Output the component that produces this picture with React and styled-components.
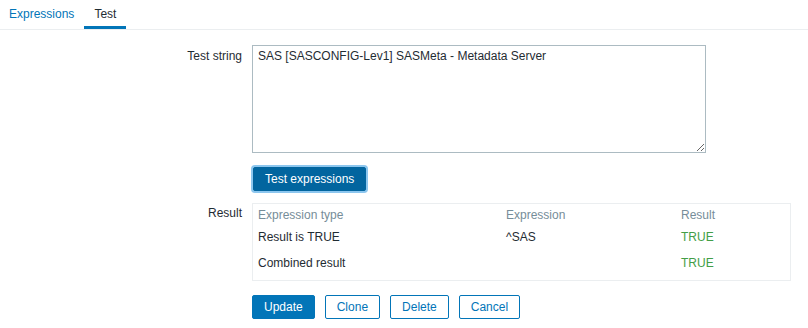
import React from "react";
import styled, { createGlobalStyle } from "styled-components";

const GlobalStyle = createGlobalStyle`
  body {
    margin: 0;
    background: #ffffff;
    font-family: "Liberation Sans", Arial, sans-serif;
    font-size: 12px;
    color: #1f2c33;
  }
`;

const TabBar = styled.div`
  display: flex;
  height: 29px;
  border-bottom: 1px solid #ebeef0;
  margin-left: -1px;
`;

const Tab = styled.div`
  padding: 2px 10px 0;
  line-height: 24px;
  height: 29px;
  box-sizing: border-box;
  color: ${(p) => (p.active ? "#1f2c33" : "#0275b8")};
  border-bottom: 3px solid ${(p) => (p.active ? "#0275b8" : "transparent")};
`;

const Form = styled.div`
  display: grid;
  grid-template-columns: 242px 1fr;
  column-gap: 10px;
  padding-top: 15px;
`;

const Label = styled.div`
  text-align: right;
  padding-top: ${(p) => p.top || 4}px;
  line-height: 14px;
`;

const Field = styled.div`
  margin-bottom: ${(p) => p.gap || 0}px;
`;

const TextArea = styled.textarea`
  display: block;
  width: 454px;
  height: 108px;
  box-sizing: border-box;
  border: 1px solid #acbbc2;
  padding: 3px 5px;
  font-family: "Liberation Sans", Arial, sans-serif;
  font-size: 12px;
  line-height: 14px;
  color: #1f2c33;
  outline: none;
`;

const Button = styled.button`
  height: 24px;
  box-sizing: border-box;
  padding: 0 11px;
  font-family: "Liberation Sans", Arial, sans-serif;
  font-size: 12px;
  line-height: 22px;
  border-radius: 2px;
  border: 1px solid #0275b8;
  background: ${(p) => (p.primary ? "#0275b8" : "#ffffff")};
  color: ${(p) => (p.primary ? "#ffffff" : "#0275b8")};
  cursor: pointer;
`;

const FocusButton = styled(Button)`
  background: #02659f;
  border-color: #02659f;
  margin-left: 1px;
  box-shadow: 0 0 0 2px #8cc6ee;
`;

const Table = styled.div`
  width: 537px;
  border: 1px solid #ebeef0;
  padding-bottom: 6px;
`;

const Row = styled.div`
  display: grid;
  grid-template-columns: 248px 175px 1fr;
  height: 22px;
  align-items: center;
  margin-top: ${(p) => p.top || 0}px;
  color: ${(p) => (p.header ? "#768d99" : "#1f2c33")};
`;

const Cell = styled.div`
  padding: 0 5px;
  color: ${(p) => (p.ok ? "#429e47" : "inherit")};
`;

const Actions = styled.div`
  display: flex;
  gap: 10px;
`;

const rows = [
  { type: "Result is TRUE", expr: "^SAS", result: "TRUE", top: 0 },
  { type: "Combined result", expr: "", result: "TRUE", top: 4 },
];

export default function App() {
  return (
    <>
      <GlobalStyle />
      <TabBar>
        <Tab>Expressions</Tab>
        <Tab active>Test</Tab>
      </TabBar>
      <Form>
        <Label>Test string</Label>
        <Field gap={14}>
          <TextArea defaultValue="SAS [SASCONFIG-Lev1] SASMeta - Metadata Server" />
        </Field>
        <div />
        <Field gap={12}>
          <FocusButton primary>Test expressions</FocusButton>
        </Field>
        <Label top={3}>Result</Label>
        <Field gap={14}>
          <Table>
            <Row header>
              <Cell>Expression type</Cell>
              <Cell>Expression</Cell>
              <Cell>Result</Cell>
            </Row>
            {rows.map((r) => (
              <Row key={r.type} top={r.top}>
                <Cell>{r.type}</Cell>
                <Cell>{r.expr}</Cell>
                <Cell ok>{r.result}</Cell>
              </Row>
            ))}
          </Table>
        </Field>
        <div />
        <Actions>
          <Button primary>Update</Button>
          <Button>Clone</Button>
          <Button>Delete</Button>
          <Button>Cancel</Button>
        </Actions>
      </Form>
    </>
  );
}
